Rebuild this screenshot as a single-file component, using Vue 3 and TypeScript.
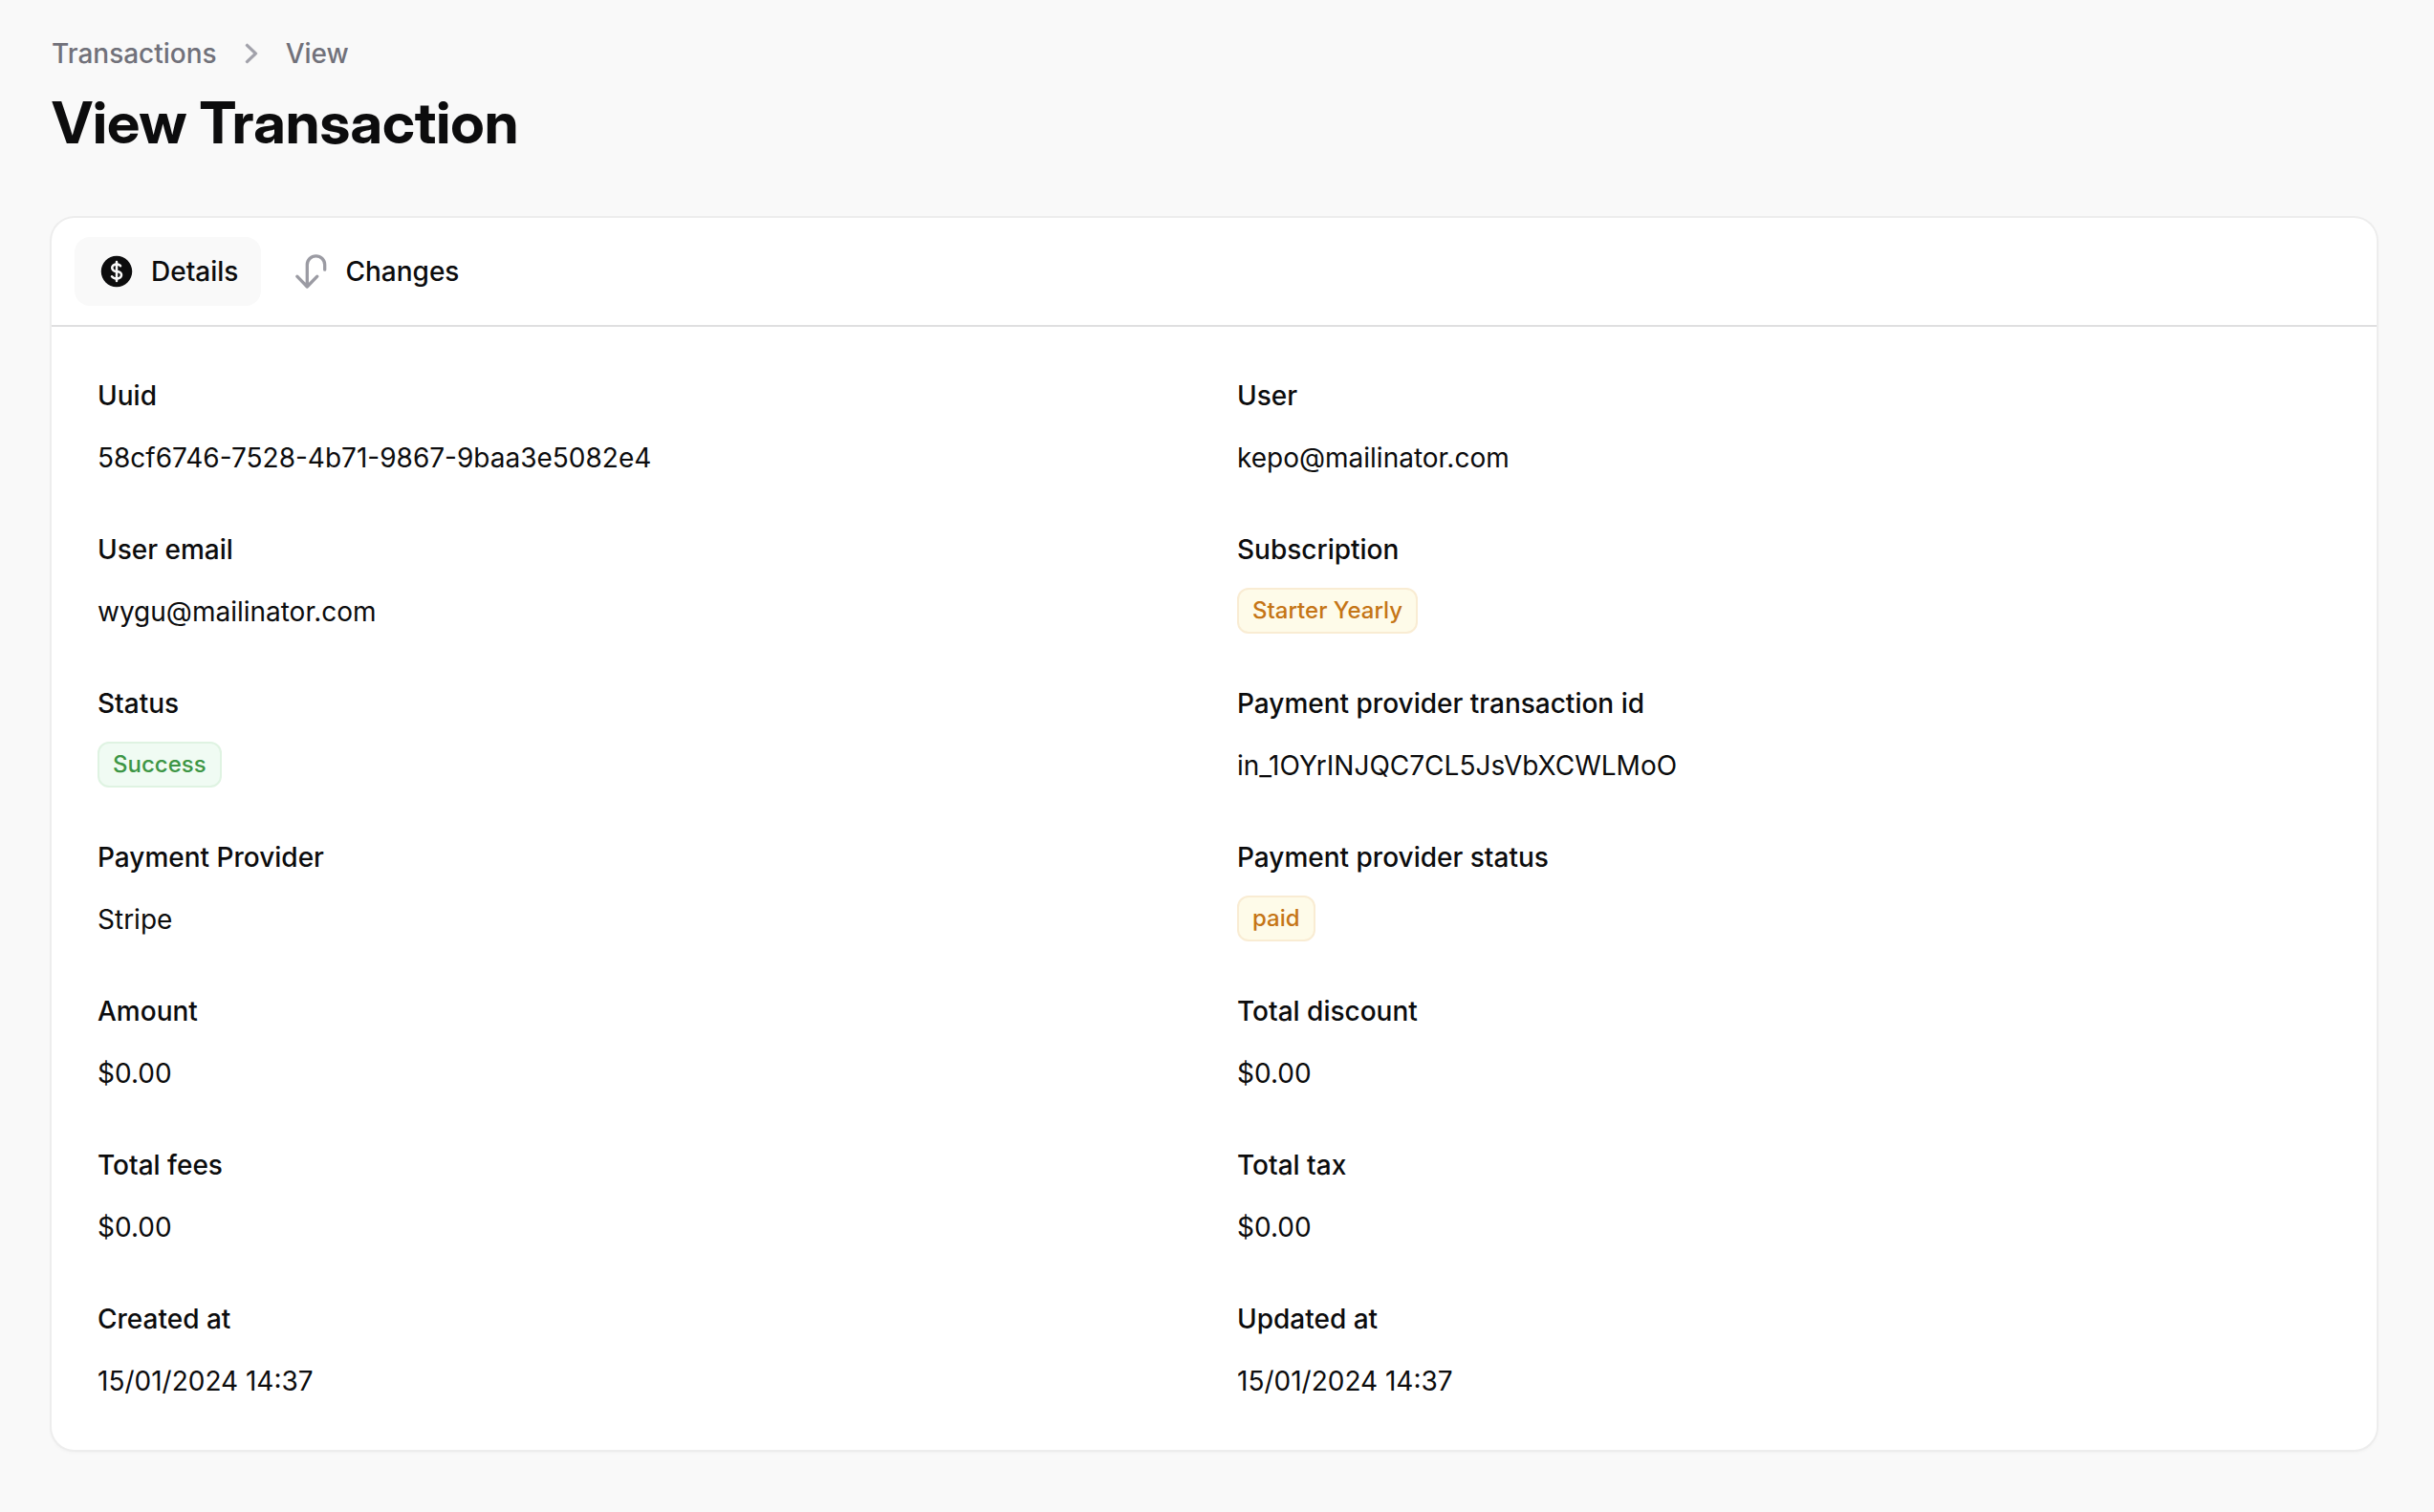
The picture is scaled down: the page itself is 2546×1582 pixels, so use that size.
<script setup lang="ts">
import { ref } from 'vue'

interface Entry {
  label: string
  value: string
  badge?: 'success' | 'warning'
}

const activeTab = ref<'details' | 'changes'>('details')

const entries: Entry[] = [
  { label: 'Uuid', value: '58cf6746-7528-4b71-9867-9baa3e5082e4' },
  { label: 'User', value: 'kepo@mailinator.com' },
  { label: 'User email', value: 'wygu@mailinator.com' },
  { label: 'Subscription', value: 'Starter Yearly', badge: 'warning' },
  { label: 'Status', value: 'Success', badge: 'success' },
  { label: 'Payment provider transaction id', value: 'in_1OYrINJQC7CL5JsVbXCWLMoO' },
  { label: 'Payment Provider', value: 'Stripe' },
  { label: 'Payment provider status', value: 'paid', badge: 'warning' },
  { label: 'Amount', value: '$0.00' },
  { label: 'Total discount', value: '$0.00' },
  { label: 'Total fees', value: '$0.00' },
  { label: 'Total tax', value: '$0.00' },
  { label: 'Created at', value: '15/01/2024 14:37' },
  { label: 'Updated at', value: '15/01/2024 14:37' },
]
</script>

<template>
  <main class="page">
    <header class="page-header">
      <nav class="breadcrumbs" aria-label="Breadcrumb">
        <a href="#transactions">Transactions</a>
        <svg
          class="chevron"
          viewBox="0 0 20 20"
          fill="currentColor"
          stroke="currentColor"
          stroke-width="0.2"
          aria-hidden="true"
        >
          <path
            fill-rule="evenodd"
            d="M7.21 14.77a.75.75 0 0 1 .02-1.06L11.168 10 7.23 6.29a.75.75 0 1 1 1.04-1.08l4.5 4.25a.75.75 0 0 1 0 1.08l-4.5 4.25a.75.75 0 0 1-1.06-.02Z"
          />
        </svg>
        <a href="#view">View</a>
      </nav>
      <h1>View Transaction</h1>
    </header>

    <section class="card">
      <nav class="tabs" role="tablist">
        <button
          type="button"
          role="tab"
          class="tab"
          :class="{ active: activeTab === 'details' }"
          :aria-selected="activeTab === 'details'"
          @click="activeTab = 'details'"
        >
          <svg class="tab-icon" viewBox="0 0 24 24" fill="currentColor" aria-hidden="true">
            <path
              d="M10.464 8.746c.227-.18.497-.311.786-.394v2.795a2.252 2.252 0 0 1-.786-.393c-.394-.313-.546-.681-.546-1.004 0-.323.152-.691.546-1.004ZM12.75 15.662v-2.824c.347.085.664.228.921.421.427.32.579.686.579.991 0 .305-.152.671-.579.991a2.534 2.534 0 0 1-.921.42Z"
            />
            <path
              fill-rule="evenodd"
              d="M12 2.25c-5.385 0-9.75 4.365-9.75 9.75s4.365 9.75 9.75 9.75 9.75-4.365 9.75-9.75S17.385 2.25 12 2.25ZM12.75 6a.75.75 0 0 0-1.5 0v.816a3.836 3.836 0 0 0-1.72.756c-.712.566-1.112 1.35-1.112 2.178 0 .829.4 1.612 1.113 2.178.502.4 1.102.647 1.719.756v2.978a2.536 2.536 0 0 1-.921-.421l-.879-.66a.75.75 0 0 0-.9 1.2l.879.66c.533.4 1.169.645 1.821.75V18a.75.75 0 0 0 1.5 0v-.81a4.124 4.124 0 0 0 1.821-.749c.745-.559 1.179-1.344 1.179-2.191 0-.847-.434-1.632-1.179-2.191a4.122 4.122 0 0 0-1.821-.75V8.354c.29.082.559.213.786.393l.415.33a.75.75 0 0 0 .933-1.175l-.415-.33a3.836 3.836 0 0 0-1.719-.755V6Z"
            />
          </svg>
          <span>Details</span>
        </button>
        <button
          type="button"
          role="tab"
          class="tab"
          :class="{ active: activeTab === 'changes' }"
          :aria-selected="activeTab === 'changes'"
          @click="activeTab = 'changes'"
        >
          <svg
            class="tab-icon"
            viewBox="0 0 40 40"
            fill="none"
            stroke="currentColor"
            stroke-width="3.3"
            stroke-linecap="round"
            stroke-linejoin="round"
            aria-hidden="true"
          >
            <path d="M5.800 25.200 16.300 36 26.800 25.200M16.300 36V13a9.200 9.200 0 0 1 18.400 0v5.200" />
          </svg>
          <span>Changes</span>
        </button>
      </nav>

      <dl class="entries">
        <div v-for="entry in entries" :key="entry.label" class="entry">
          <dt>{{ entry.label }}</dt>
          <dd>
            <span v-if="entry.badge" class="badge" :class="entry.badge">{{ entry.value }}</span>
            <template v-else>{{ entry.value }}</template>
          </dd>
        </div>
      </dl>
    </section>
  </main>
</template>

<style>
body {
  background: #f9f9f9;
}
</style>

<style scoped>
.page {
  padding: 36px 60px 64px 54px;
  font-family: Inter, 'Liberation Sans', sans-serif;
  font-size: 28px;
  line-height: 48px;
  color: #0c0c0d;
}

.page-header {
  display: flex;
  flex-direction: column;
  gap: 16px;
  margin-bottom: 64px;
}

.breadcrumbs {
  display: flex;
  align-items: center;
  gap: 16px;
  font-weight: 500;
  line-height: 40px;
  color: #71717a;
}

.breadcrumbs a {
  color: inherit;
  text-decoration: none;
}

.chevron {
  width: 40px;
  height: 40px;
  color: #a1a1aa;
}

h1 {
  margin: 0;
  font-family: 'Inter Display', Inter, 'Liberation Sans', sans-serif;
  font-size: 61px;
  font-weight: 700;
  font-variation-settings: 'opsz' 32;
  line-height: 72px;
}

.card {
  border-radius: 24px;
  background: #fff;
  box-shadow:
    0 0 0 2px #ededed,
    0 2px 4px rgba(0, 0, 0, 0.06);
}

.tabs {
  display: flex;
  gap: 8px;
  padding: 20px 24px;
  border-bottom: 2px solid #dfdfe0;
}

.tab {
  display: flex;
  align-items: center;
  gap: 16px;
  padding: 16px 24px;
  border: 0;
  border-radius: 16px;
  background: none;
  font: inherit;
  font-weight: 500;
  line-height: 40px;
  color: inherit;
  cursor: pointer;
}

.tab.active {
  background: #f9f9f9;
}

.tab-icon {
  width: 40px;
  height: 40px;
  color: #9b9ba3;
}

.tab.active .tab-icon {
  color: inherit;
}

.entries {
  display: grid;
  grid-template-columns: 1fr 1fr;
  gap: 47px 48px;
  margin: 0;
  padding: 48px 48px 47px;
}

.entry {
  display: flex;
  flex-direction: column;
  gap: 16px;
}

dt {
  font-weight: 500;
}

dd {
  display: flex;
  align-items: flex-start;
  min-height: 50px;
  margin: 0;
  line-height: 50px;
}

.badge {
  padding: 6px 14px;
  border: 2px solid;
  border-radius: 12px;
  font-size: 24px;
  font-weight: 500;
  line-height: 32px;
}

.badge.success {
  border-color: #dff3e2;
  background: #f0fbf3;
  color: #3d9645;
}

.badge.warning {
  border-color: #f9ecd3;
  background: #fefbe9;
  color: #c57516;
}
</style>
